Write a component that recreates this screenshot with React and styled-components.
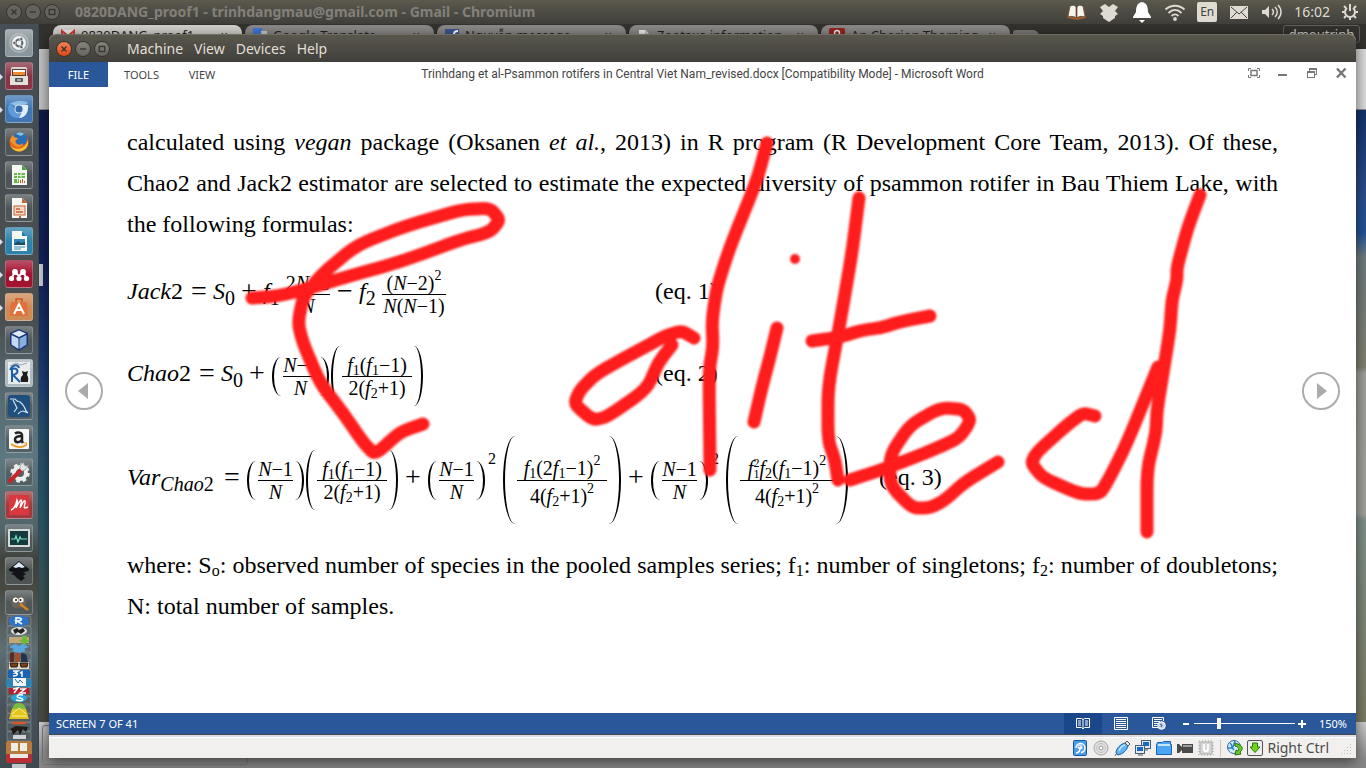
import React from "react";
import styled, { createGlobalStyle } from "styled-components";

const ui = '"Noto Sans", "Open Sans", sans-serif';
const serif = '"Liberation Serif", "Times New Roman", serif';

const GlobalStyle = createGlobalStyle`
  * { box-sizing: border-box; }
  body { margin: 0; font-family: ${ui}; }
  button, input { font: inherit; color: inherit; padding: 0; margin: 0; border: 0; background: none; }
  svg { display: block; flex: none; }
  p { margin: 0; }
`;

/* ---------- desktop ---------- */
const Desktop = styled.div`
  position: relative;
  min-height: 100vh;
  display: flex;
  flex-direction: column;
  overflow: hidden;
  background: #3c3b37;
`;
const Panel = styled.header`
  height: 24px;
  flex: none;
  display: flex;
  align-items: center;
  padding: 0 7px 0 6px;
  color: #dfdbd2;
  background: linear-gradient(#5d5b4f, #55534a 20%, #403f3a);
`;
const WindowControls = styled.div`
  display: flex;
  gap: 3px;
`;
const Control = styled.button`
  width: 16px;
  height: 16px;
  border-radius: 50%;
  border: 1px solid #35342f;
  display: grid;
  place-items: center;
  color: #35342f;
  background: ${(p) => (p.$close ? "linear-gradient(#f68257, #de4814)" : p.$dim ? "#65635b" : "linear-gradient(#85837a, #65635b)")};
`;
const PanelTitle = styled.h1`
  margin: 0 0 0 15px;
  flex: 1;
  font-size: 14px;
  line-height: 24px;
  font-weight: 700;
  color: #83807a;
  white-space: nowrap;
`;
const Indicators = styled.div`
  display: flex;
  align-items: center;
  gap: 11px;
`;
const Language = styled.span`
  width: 20px;
  height: 20px;
  border-radius: 2px;
  background: #dfdbd2;
  color: #45433d;
  font-size: 12px;
  line-height: 20px;
  text-align: center;
`;
const Clock = styled.time`
  font-size: 14px;
  line-height: 20px;
`;
const Below = styled.div`
  flex: 1;
  display: flex;
`;

/* ---------- launcher ---------- */
const Launcher = styled.nav`
  width: 39px;
  flex: none;
  height: calc(100vh - 24px);
  overflow: hidden;
  display: flex;
  flex-direction: column;
  padding: 5px 0 0 5px;
  background: linear-gradient(#454e54, #4b4f50 36%, #4a4f51 40%, #55666d 48%, #5c7880 58%, #526467 68%, #41423c 72%, #494a44 76%, #5e6e73 84%, #47525a 92%, #404b50);
  border-right: 1px solid #39474e;
`;
const Tile = styled.button`
  position: relative;
  flex: none;
  width: 28px;
  height: 28px;
  margin-bottom: 5px;
  border-radius: 3px;
  display: grid;
  place-items: center;
  background: linear-gradient(rgba(255,255,255,.25), rgba(255,255,255,0) 50%), ${(p) => p.$bg || "rgba(80,88,91,.7)"};
  border: 1px solid rgba(190,200,205,.35);
  &:last-of-type {
    height: 25px;
    margin-bottom: 0;
  }
  &::before {
    content: ${(p) => (p.$running ? '""' : "none")};
    position: absolute;
    left: -6px;
    top: 11px;
    border-left: 3px solid #dde;
    border-top: 3px solid transparent;
    border-bottom: 3px solid transparent;
  }
`;

/* ---------- browser behind ---------- */
const Browser = styled.main`
  flex: 1;
  min-width: 0;
  display: flex;
  flex-direction: column;
`;
const TabStrip = styled.div`
  height: 25px;
  flex: none;
  display: flex;
  gap: 3px;
  padding: 1px 6px 0 14px;
  background: #33322e;
`;
const BrowserTab = styled.div`
  width: 189px;
  height: 24px;
  flex: none;
  display: flex;
  align-items: flex-start;
  gap: 6px;
  padding: 2px 14px 0 8px;
  border-radius: 8px 8px 0 0;
  background: ${(p) => (p.$active ? "#d3d1cd" : "#8b8987")};
  color: #222;
  font-size: 13px;
  line-height: 16px;
`;
const TabName = styled.span`
  flex: 1;
  overflow: hidden;
  white-space: nowrap;
`;
const NewTab = styled.button`
  width: 26px;
  height: 16px;
  margin-top: 5px;
  border-radius: 3px 6px 3px 3px;
  background: #7c7a77;
`;
const Profile = styled.button`
  margin-left: auto;
  height: 18px;
  width: 77px;
  border: 1px solid #62605a;
  border-radius: 3px;
  color: #d5d2cb;
  font-size: 13px;
  line-height: 14px;
`;
const BrowserBar = styled.div`
  height: 61px;
  flex: none;
  background: linear-gradient(90deg, #c4c4c4, #dedede);
  border-bottom: 1px solid #8a8a8a;
`;
const Page = styled.div`
  flex: 1;
  background:
    linear-gradient(#c9ccd0, #c9ccd0) 0 154px / 4px 22px no-repeat,
    linear-gradient(#101b4c, #12225a 25%, #1b3f76 45%, #24506f 52%, #2b586b 68%, #475348 88%, #4c4d40);
`;
const PageEdge = styled.div`
  width: 10px;
  height: 100%;
  margin-left: auto;
  background: linear-gradient(#14326c, #2c4f8f 14%, #24549a 20%, #707c80 24%, #828272 42%, #a0a09c 43%, #a3a39d 66%, #81928a 67%, #7d7d66);
`;
const DownloadBar = styled.div`
  height: 46px;
  flex: none;
  padding: 3px;
  background: linear-gradient(#d0d0d0, #8a8a8a 80%, #868686);
`;
const DownloadItem = styled.div`
  width: 206px;
  height: 40px;
  border: 1px solid #777;
  border-radius: 3px;
`;

/* ---------- virtual machine window ---------- */
const VmWindow = styled.section`
  position: absolute;
  top: 34px;
  left: 49px;
  right: 10px;
  bottom: 10px;
  display: flex;
  flex-direction: column;
  border-radius: 7px 7px 0 0;
  background: #fff;
  box-shadow: 0 3px 14px rgba(0, 0, 0, .6);
`;
const VmTitle = styled.div`
  height: 28px;
  flex: none;
  display: flex;
  align-items: center;
  padding: 0 7px;
  border-top: 1px solid #706e62;
  border-radius: 7px 7px 0 0;
  background: linear-gradient(#59574d, #403f3a);
`;
const VmMenu = styled.nav`
  display: flex;
  gap: 11px;
  margin-left: 17px;
  color: #e2dfd7;
  font-size: 14px;
  line-height: 20px;
`;
const WordHeader = styled.header`
  height: 25px;
  flex: none;
  display: grid;
  grid-template-columns: 1fr auto 1fr;
  color: #444;
  font-size: 11px;
  line-height: 25px;
`;
const WordMenu = styled.nav`
  display: flex;
`;
const WordMenuItem = styled.button`
  width: ${(p) => p.$w}px;
  color: ${(p) => (p.$primary ? "#fff" : "#444")};
  background: ${(p) => (p.$primary ? "#2a579a" : "none")};
`;
const WordTitle = styled.h2`
  margin: 0;
  font-family: Roboto, ${ui};
  font-size: 12px;
  font-weight: 400;
  white-space: nowrap;
`;
const WordControls = styled.div`
  display: flex;
  justify-content: flex-end;
  align-items: center;
  gap: 17px;
  padding: 0 9px 3px 0;
`;
const Reader = styled.div`
  flex: 1;
  display: flex;
  justify-content: space-between;
  padding: 0 16px;
`;
const PageTurn = styled.button`
  flex: none;
  width: 38px;
  height: 38px;
  margin-top: 285px;
  border: 2px solid #ababab;
  border-radius: 50%;
  display: grid;
  place-items: center;
`;
const Article = styled.article`
  flex: 1;
  min-width: 0;
  margin: 0 24px;
  padding-top: 35px;
  color: #000;
  font-family: ${serif};
  font-size: 24px;
`;
const Line = styled.span`
  display: block;
  line-height: 41px;
  white-space: nowrap;
  text-align-last: ${(p) => (p.$last ? "left" : "justify")};
`;
const LowSub = styled.sub`
  font-size: 16px;
  line-height: 0;
  vertical-align: -3px;
`;

/* ---------- formulas ---------- */
const EquationRow = styled.div`
  height: ${(p) => p.$h}px;
  display: flex;
  align-items: center;
  line-height: 28px;
  white-space: nowrap;
`;
const Formula = styled.div`
  flex: none;
  width: ${(p) => p.$w}px;
  display: flex;
  align-items: center;
`;
const Term = styled.span`
  flex: none;
  font-style: italic;
  min-width: ${(p) => p.$w || 0}px;
`;
const Digit = styled.span`
  font-style: normal;
`;
const Sub = styled.sub`
  font-size: ${(p) => (p.$small ? 14 : 20)}px;
  font-style: ${(p) => (p.$italic ? "italic" : "normal")};
  line-height: 0;
  vertical-align: ${(p) => (p.$small ? -3 : -6)}px;
`;
const Sup = styled.sup`
  font-size: 14px;
  font-style: normal;
  line-height: 0;
  vertical-align: 10px;
`;
const Scripts = styled.span`
  display: inline-flex;
  flex-direction: column;
  vertical-align: 8px;
  font-size: 12px;
  line-height: 11px;
  height: 12px;
  font-style: normal;
`;
const Power = styled.span`
  width: 10px;
  margin: 0 4px 36px 2px;
  font-size: 16px;
  line-height: 16px;
`;
const Op = styled.span`
  flex: none;
  width: 16px;
  margin: 0 6px;
  text-align: center;
  font-size: 28px;
`;
const Fraction = styled.span`
  flex: none;
  display: flex;
  flex-direction: column;
  align-items: center;
  width: ${(p) => p.$w}px;
  margin: ${(p) => (p.$tall ? 12 : 6)}px 1px 0;
  font-size: 20px;
  line-height: ${(p) => (p.$tall ? 24 : 22)}px;
  font-style: italic;
`;
const Numerator = styled.span`
  width: 100%;
  display: flex;
  justify-content: center;
  border-bottom: 1px solid #000;
`;
const Denominator = styled.span`
  display: block;
  line-height: ${(p) => (p.$tall ? 30 : 22)}px;
`;
const Paren = styled.span`
  flex: none;
  width: ${(p) => (p.$h > 70 ? 12 : 9)}px;
  height: ${(p) => p.$h}px;
  margin: 6px 1px 0;
  border: 0 solid #000;
  border-width: ${(p) => (p.$right ? "0 2px 0 0" : "0 0 0 2px")};
  border-radius: ${(p) => (p.$right ? "0 100% 100% 0 / 0 50% 50% 0" : "100% 0 0 100% / 50% 0 0 50%")};
`;

/* ---------- status bars ---------- */
const WordStatus = styled.footer`
  height: 21px;
  flex: none;
  display: flex;
  align-items: center;
  padding: 0 9px 0 7px;
  background: #2a579a;
  color: #fff;
  font-size: 11px;
  line-height: 21px;
`;
const Views = styled.div`
  display: flex;
  margin-left: auto;
`;
const ViewButton = styled.button`
  width: 38px;
  height: 21px;
  display: grid;
  place-items: center;
  background: ${(p) => (p.$on ? "#19478a" : "none")};
`;
const ZoomGroup = styled.div`
  display: flex;
  align-items: center;
  gap: 3px;
  margin-left: 4px;
`;
const ZoomButton = styled.button`
  width: 9px;
  height: 15px;
  display: grid;
  place-items: center;
`;
const ZoomSlider = styled.input`
  appearance: none;
  width: 101px;
  height: 12px;
  background: linear-gradient(#fff, #fff) center / 100% 1px no-repeat;
  &::-webkit-slider-thumb {
    appearance: none;
    width: 4px;
    height: 11px;
    background: #fff;
  }
`;
const ZoomValue = styled.output`
  margin-left: 12px;
`;
const VmStatus = styled.footer`
  height: 24px;
  flex: none;
  display: flex;
  align-items: center;
  justify-content: flex-end;
  padding: 3px 2px 0 0;
  border-top: 1px solid #47474a;
  background: linear-gradient(#d9dce2 2px, #fff 2px, #fff 3px, #f1f0ee 3px);
  color: #4c4c4c;
  font-size: 14px;
  line-height: 20px;
`;
const IconGroup = styled.div`
  display: flex;
  align-items: center;
  gap: ${(p) => p.$gap}px;
`;
const Divider = styled.span`
  width: 1px;
  height: 17px;
  margin: 0 6px;
  background: #c6c4c0;
`;
const HostKey = styled.span`
  margin-right: 11px;
`;
const Ink = styled.svg`
  position: absolute;
  top: 0;
  left: 0;
  pointer-events: none;
  fill: none;
  stroke: #ff1e1e;
  stroke-width: 13;
  stroke-linecap: round;
  stroke-linejoin: round;
`;

const Svg = ({ s = 22, h, children, ...r }) => (
  <svg width={s} height={h || s} viewBox={`0 0 ${s} ${h || s}`} fill="none" aria-hidden="true" {...r}>{children}</svg>
);

const CtlGlyph = ({ kind }) => (
  <Svg s={8} stroke="currentColor" strokeWidth="1.3">
    {kind === "close" && <path d="M1.5 1.5l5 5M6.5 1.5l-5 5" />}
    {kind === "min" && <path d="M1 4h6" />}
    {kind === "max" && <rect x="1.2" y="1.5" width="5.6" height="5" />}
  </Svg>
);

/* ---------- launcher icons ---------- */
const doc = (accent, inner) => (
  <Svg>
    <path d="M4 1h10l5 5v15H4z" fill="#f7f7f4" />
    <path d="M14 1l5 5h-5z" fill={accent} />
    {inner}
  </Svg>
);
const launcherItems = [
  { name: "Dash", bg: "#8b979c", icon: <Svg><circle cx="11" cy="11" r="9" stroke="#c7ced1" strokeWidth="2" opacity=".5" /><circle cx="11" cy="11" r="7" fill="#f3f4f4" /><circle cx="11" cy="11" r="3.4" stroke="#5b676c" strokeWidth="2" /><g fill="#5b676c" stroke="#f3f4f4" strokeWidth=".7"><circle cx="6.4" cy="11" r="1.7" /><circle cx="13.3" cy="7" r="1.7" /><circle cx="13.3" cy="15" r="1.7" /></g></Svg> },
  { name: "Files", bg: "#8a3445", running: true, icon: <Svg><rect x="3" y="2" width="16" height="18" rx="1.5" fill="#d8d5ce" /><path d="M4 4h14v7H4z" fill="#5a3a28" /><path d="M5 5h12v2H5z" fill="#fff" /><path d="M5 7h12v3H5z" fill="#f08a35" /><path d="M2 11h18v9H2z" fill="#e3e1dc" /><rect x="7" y="13" width="8" height="4" rx="1" fill="#555" /><path d="M9 15h4" stroke="#fff" /></Svg> },
  { name: "Chromium", bg: "#4076b4", running: true, icon: <Svg><path d="M11 11L2 5c2 0 6-2 9-2s7 0 9 2z" fill="#8fbde6" /><path d="M2 5a9.500 9.500 0 0 0 9 15l2-6-6-3z" fill="#5e9bd8" /><path d="M13 7h7c1 7-3 13-9 13l4-8z" fill="#e3eff9" /><circle cx="11" cy="11" r="4.600" fill="#cfe2f4" /><circle cx="11" cy="11" r="3.500" fill="#3569ad" /></Svg> },
  { name: "Firefox", icon: <Svg><circle cx="11" cy="11" r="9.500" fill="#e8651b" /><path d="M5 4c4-4 11-3 14 2 1 4-1 8-5 8-4 1-7-2-6-5z" fill="#2a6db5" /><path d="M8 3c2-2 6-2 8 0l-3 2z" fill="#7fc4ea" /><path d="M2 9l3-5c0 2 2 3 5 3-1 2-3 2-3 3 0 4 6 5 8 2 0 3-3 4-5 4s-6-3-8-7z" fill="#f4932a" /><path d="M2 13c2 6 15 8 18-4 1 7-3 11-9 11.500-5 0-8-4-9-7.500z" fill="#f9c22f" /></Svg> },
  { name: "Calc", icon: doc("#4aa63c", <g><path d="M6 9h11v5H6zM6 15h5v4H6z" fill="#69b84e" /><path d="M6 11.500h11M9.500 9v9M13 9v5" stroke="#dff2d8" /><path d="M12 19v-3h1v3zM14 19v-4h1v4zM16 19v-2h1v2z" fill="#c65b2c" /></g>) },
  { name: "Impress", icon: doc("#c7622f", <g><rect x="6" y="9" width="11" height="9" fill="#f3d9cb" stroke="#c7622f" /><path d="M8 12h4M8 15h7" stroke="#c7622f" strokeWidth="1.5" /><path d="M11 19h2v2h-2z" fill="#c7622f" /></g>) },
  { name: "Writer", bg: "#2d83ad", running: true, icon: doc("#1c7db4", <g><path d="M6 9h11v5H6z" fill="#2f88b9" /><path d="M6 14l4-3 3 2 4-1v3H6z" fill="#1f4e62" /><path d="M6 17h11M6 19h7" stroke="#2f88b9" /></g>) },
  { name: "Mendeley", bg: "#a3132f", running: true, icon: <Svg><g fill="#fff"><circle cx="3.500" cy="15.500" r="2.600" /><circle cx="11" cy="15.500" r="2.600" /><circle cx="18.500" cy="15.500" r="2.600" /><circle cx="7" cy="9" r="2.900" /><circle cx="15" cy="9" r="2.900" /></g><path d="M3.500 15L7 9l4 4 4-4 3.500 6" stroke="#fff" strokeWidth="2" /></Svg> },
  { name: "Software", bg: "#cf8b55", running: true, icon: <Svg><path d="M8 6V3h6v3" stroke="#d9521c" strokeWidth="1.500" /><path d="M3 6h16l1 14H2z" fill="#e2703a" /><path d="M6 18l5-10 5 10M8 14h6" stroke="#fff" strokeWidth="2" /></Svg> },
  { name: "VirtualBox", icon: <Svg><path d="M11 0l9 4v12l-9 6-9-6V4z" fill="#1b3478" /><path d="M11 1.500L18 4.500l-7 3.500-7-3.500z" fill="#dfeaf6" /><path d="M3.500 6L10.500 9.500v10.500L3.500 15.500z" fill="#c3d9f0" /><path d="M18.500 6L11.500 9.500v10.500l7-4.500z" fill="#88b0dc" /></Svg> },
  { name: "RKWard", bg: "#aeb9bd", icon: <Svg><path d="M0 0h22v22H0z" fill="#e9eced" /><path d="M2 8c3-6 8-6 9-2M4 20V7c6-2 8 4 1 6l7 7" stroke="#1d5ea8" strokeWidth="2" /><path d="M13 20c-1-5 1-6 2-7l-1-4 3 1 3-1-1 4c2 3 1 5 1 7z" fill="#1c1c1c" /><path d="M2 4l6-3 5 2 6-2" stroke="#9da7ab" /></Svg> },
  { name: "MySQL Workbench", icon: <Svg><rect width="22" height="22" rx="3" fill="#1f4f7d" /><path d="M2 4h5l2 2 3 1c4 3 5 6 6 9l2 2-5-2c-3 0-4 2-5 3M5 5l4 8-3 4" stroke="#cfe2f0" strokeWidth="1.200" /></Svg> },
  { name: "Amazon", icon: <Svg><rect x="1" y="1" width="20" height="20" rx="1" fill="#f7f7f7" /><path d="M7 5.500c3-2 7-1 7 2v6l1 1.500M14 8c-4 0-7 1-7 3.500 0 3.500 5 3.500 7 0" stroke="#222" strokeWidth="2.500" /><path d="M3 16c5 4 11 4 15 1" stroke="#f29a1d" strokeWidth="1.800" /><path d="M16 15l3 0-1 3" stroke="#f29a1d" /></Svg> },
  { name: "Settings", icon: <Svg><circle cx="12" cy="12" r="6" stroke="#eceeee" strokeWidth="4" /><circle cx="12" cy="12" r="8.500" stroke="#eceeee" strokeWidth="2.500" strokeDasharray="3.700 3" /><path d="M2 20L14 8" stroke="#c8252a" strokeWidth="4" strokeLinecap="round" /><path d="M12 8l2 2 3-1 4-5-3 1-2-1 0-3-4 4z" fill="#e6e6e6" stroke="#888" strokeWidth=".6" /></Svg> },
  { name: "Mathcad", bg: "#a03a3e", icon: <Svg><rect x="1" y="1" width="20" height="20" fill="#d8393f" /><path d="M3 16c3-1 5-5 6-10 1 2 0 5-1 8 3-6 4-8 5-8s0 4-1 8c3-6 4-8 5-7s-2 7 0 7l3-1" stroke="#fff" strokeWidth="1.400" /></Svg> },
  { name: "System Monitor", icon: <Svg><rect x="0" y="2" width="22" height="18" rx="1" fill="#d7d9d8" /><rect x="2" y="4" width="18" height="14" fill="#133a3c" /><path d="M3 12h4l1-3 2 6 2-5 1 2h6" stroke="#7fe0c3" strokeWidth="1.200" /></Svg> },
  { name: "Inkscape", icon: <Svg><path d="M11 1l10 8c1 2-3 3-6 3l3 2-3 2 2 2-4 3-4-3-3-3-3-1 3-2C3 12 0 11 1 9z" fill="#101218" /><path d="M11 2l6 5-3 1-3-1-3 1-3-1z" fill="#dce8f6" /></Svg> },
  { name: "GIMP", icon: <Svg><path d="M2 3l5 2c4-2 9-1 11 3 2 5-3 8-8 8-5 1-8-3-6-7z" fill="#6b665b" /><circle cx="7.500" cy="8" r="2.600" fill="#fff" /><circle cx="13" cy="8" r="2.600" fill="#fff" /><circle cx="8" cy="8" r="1" fill="#111" /><circle cx="12.500" cy="8" r="1" fill="#111" /><path d="M12 12l8 6" stroke="#d98022" strokeWidth="2.500" /></Svg> },
];

const LauncherStack = () => (
  <svg width="28" height="153" viewBox="0 615 28 153" aria-hidden="true">
    <g stroke="#9aa6aa" strokeOpacity=".5" fill="#5c696e" fillOpacity=".5">
      {[616, 626, 635, 644, 652, 660, 669, 678, 687, 696, 704, 713, 722, 731].map((y) => <rect key={y} x="2" y={y} width="24" height="10" rx="2" />)}
    </g>
    <ellipse cx="14" cy="621" rx="10" ry="5.500" fill="#2c72c9" />
    <path d="M11 624v-6c7-1 7 3 1 3l5 3" stroke="#e4f0fb" strokeWidth="1.800" fill="none" />
    <ellipse cx="14" cy="631" rx="8" ry="4" fill="#e2e2df" />
    <path d="M8 630l4-2 2 2 4-2 2 3-4 3-3-2-3 2z" fill="#222" />
    <path d="M4 637h20v6H4z" fill="#c3a776" /><path d="M17 636h5v4h3l-6 5-5-5h3z" fill="#6dbb35" />
    <path d="M4 647l6-3 4 2 4-2 6 3-5 2 2 2-7 2-7-2 2-2z" fill="#58a8df" />
    <path d="M5 653l4-1v10H5z" fill="#5b2b28" /><path d="M10 653h5v9h-5z" fill="#a34e2f" /><path d="M16 653l5 1 2 8h-7z" fill="#23334e" />
    <path d="M4 662h20v7H4z" fill="#e1d9c9" /><path d="M5 663h8l-1 4H6zM15 663h8l-1 4h-6z" fill="#7b401b" stroke="#231a14" />
    <rect x="3" y="670" width="22" height="8" rx="1" fill="#1763b5" /><path d="M8 671h5l-3 2c4 0 3 3-2 3M17 677v-5l-2 1" stroke="#fff" strokeWidth="1.500" fill="none" />
    <path d="M1 679h26v8H1z" fill="#2c83b4" /><path d="M8 678h13v8H8z" fill="#f2f5f6" /><path d="M10 679l3 4 2-3 3 3" stroke="#326d92" fill="none" />
    <rect x="4" y="688" width="20" height="6" fill="#b71d2d" /><path d="M8 689l5-1-4 5M15 689h5l-5 4h6" stroke="#fff" strokeWidth="1.500" fill="none" />
    <ellipse cx="14" cy="698" rx="8" ry="4" fill="#26a6de" /><path d="M18 695c-6-1-8 2-3 3s3 4-4 2" stroke="#fff" strokeWidth="1.500" fill="none" />
    <path d="M7 709c2-8 12-8 14 0z" fill="#7bbd44" />
    <path d="M7 709h14l3 10H4z" fill="#e0c51d" /><path d="M7 714l7-6 7 6M7 716h15" stroke="#fff19a" fill="none" />
    <path d="M7 723h14" stroke="#d5542a" strokeWidth="2.500" /><path d="M5 729l6-3 12 1-2 5-3-3-3 6-2-5-5 5-1-4z" fill="#1f1a16" />
    <path d="M8 735h13v4H8z" fill="#cfd3d4" />
    <rect x="1" y="741" width="26" height="14" rx="2" fill="#b87b3e" /><path d="M6 743h7v8H6zM15 743h7v8h-7z" fill="#f0ece2" />
    <rect x="1" y="754" width="26" height="9" rx="2" fill="#b92e35" /><path d="M5 754h18v4H5z" fill="#ece9e5" />
    <path d="M7 764h14v4H7z" fill="#c1c6c8" />
  </svg>
);

/* ---------- tabs ---------- */
const tabs = [
  { name: "0820DANG_proof1", active: true, icon: <Svg s={14}><path d="M1 3h12v10H1z" fill="#eee" /><path d="M1 13V4l6 5 6-5v9" stroke="#d23c31" strokeWidth="2" /></Svg> },
  { name: "Google Translate", icon: <Svg s={14}><path d="M0 1h9l2 12H0z" fill="#3f78d8" /><path d="M8 4h6v10H9z" fill="#ccc" /></Svg> },
  { name: "Nguyễn message", icon: <Svg s={14}><path d="M0 2h14v12H0z" fill="#3a5794" /><path d="M9 14V7c0-2 1-3 4-3M6 9h7" stroke="#fff" strokeWidth="2" /></Svg> },
  { name: "Zootaxa information", icon: <Svg s={14}><path d="M2 3h7l3 4v7H2z" fill="#eee" /><path d="M9 3v4h3" stroke="#999" /></Svg> },
  { name: "An Chorion Thorping", icon: <Svg s={16}><rect y="1" width="16" height="15" rx="2" fill="#97221f" /><circle cx="8" cy="6" r="2.500" stroke="#eee" strokeWidth="1.500" /><path d="M8 9c4 1 3 5 0 5s-4-3 0-3" stroke="#eee" strokeWidth="1.500" /></Svg> },
];

/* ---------- indicator icons ---------- */
const indicatorIcons = [
  <Svg key="book"><path d="M2 17l2-11h15l2 11-9 2z" fill="#a05a2c" /><path d="M3 16L5 5c3-1 5-1 6 1v11c-2-2-5-2-8-1zM20 16L18 5c-3-1-5-1-6 1v11c2-2 5-2 8-1z" fill="#f7f5ef" stroke="#3d2b20" strokeWidth=".6" /></Svg>,
  <Svg key="dropbox"><path d="M7 3l4 3 4-3 5 3-3 4 3 3-3 2v2l-6 4-6-4v-2l-3-2 3-3-3-4z" fill="#dfdbd2" /></Svg>,
  <Svg key="bell"><path d="M11 1c5 1 6 5 6 10l3 5v1H2v-1l3-5C5 6 6 2 11 1z" fill="#fff" /><path d="M8 19h6l-3 3z" fill="#fff" /></Svg>,
  <Svg key="wifi" stroke="#dfdbd2" strokeWidth="1.800"><path d="M1.500 8.500C7 3.500 15 3.500 20.500 8.500M4.500 12c4-4 9-4 13 0M7.500 15c2-2 5-2 7 0" /><circle cx="11" cy="18" r="1" fill="#dfdbd2" /></Svg>,
];

const vmIcons = [
  <Svg key="disk" s={16}><rect x="1.500" y=".5" width="13" height="15" rx="1" fill="#4a9ee8" stroke="#1554a0" /><path d="M4 8a4.500 4.500 0 1 1 5 4.500M4 13c3 0 5-3 3-5l2-1 1 2" stroke="#fff" strokeWidth="1.500" /><circle cx="8" cy="7" r="2" stroke="#fff" /></Svg>,
  <Svg key="cd" s={16}><circle cx="8" cy="8" r="7" fill="#e1e1e1" stroke="#a5a5a5" /><circle cx="8" cy="8" r="4.500" stroke="#c4c4c4" /><circle cx="8" cy="8" r="2" stroke="#9a9a9a" fill="#fff" /></Svg>,
  <Svg key="usb" s={16}><path d="M2 13c0-5 5-9 9-10l3 3c-1 4-5 8-10 9z" fill="#5fb2f3" stroke="#1a5fb0" /><path d="M5 11c1-3 3-5 6-6" stroke="#c5e4fb" strokeWidth="1.500" /><path d="M11 3l2-2 3 3-2 2z" fill="#e8e8e8" stroke="#555" /><path d="M3 13l-2 3" stroke="#555" /></Svg>,
  <Svg key="net" s={16}><rect x="6.500" y=".5" width="9" height="8" fill="#e5e8ea" stroke="#44607b" /><path d="M8 2h6v4H8z" fill="#1669c4" /><rect x=".5" y="5.500" width="9" height="8" fill="#e5e8ea" stroke="#44607b" /><path d="M2 7h6v4H2z" fill="#1669c4" /><path d="M3 15h5M10 10h3" stroke="#555" /></Svg>,
  <Svg key="folder" s={16}><path d="M.5 4.500l1-2h5l1-1h7v3h1v10H.5z" fill="#4aa5f3" stroke="#1c62ae" /><path d="M2 5h12" stroke="#c9e5fc" strokeWidth="2" /></Svg>,
  <Svg key="cam" s={16}><path d="M0 4h2l3 3V4h11v9H5v-3l-3 3H0z" fill="#4a4a4a" /><path d="M6 6h9" stroke="#bbb" strokeWidth="1.500" /></Svg>,
  <Svg key="chip" s={16}><rect x="2" y="2" width="12" height="12" rx="1" fill="#d6d6d6" stroke="#aaa" /><rect x="1" y="1" width="14" height="14" stroke="#999" strokeDasharray="1 2" /><path d="M6 4v5c0 3 4 3 4 0V4" stroke="#fff" strokeWidth="1.800" /></Svg>,
];

const inkStrokes = [
  [[252, 298], [278, 296], [303, 290], [343, 278], [403, 261], [460, 240], [490, 232], [500, 220], [490, 208], [460, 210], [403, 227], [357, 245], [323, 273], [303, 297], [298, 323], [303, 343], [320, 383], [343, 413], [363, 442], [375, 455], [400, 432], [423, 424]],
  [[694, 338], [682, 331], [667, 335], [643, 348], [597, 373], [580, 390], [574, 404], [593, 420], [607, 417], [647, 389], [658, 363], [672, 345]],
  [[767, 143], [757, 180], [730, 247], [717, 287], [712, 320], [713, 347], [709, 370], [710, 470]],
  [[777, 328], [770, 357], [762, 387], [754, 422]],
  [[859, 198], [852, 253], [840, 323], [828, 387], [828, 440], [835, 460], [838, 480]],
  [[812, 341], [840, 337], [863, 330], [880, 328], [903, 321], [930, 316]],
  [[850, 480], [890, 467], [940, 447], [960, 437], [971, 420], [963, 409], [940, 408], [910, 425], [890, 455], [890, 485], [912, 508], [930, 508], [945, 500], [965, 482], [998, 462]],
  [[1095, 416], [1083, 413], [1067, 425], [1037, 452], [1031, 463], [1043, 478], [1080, 494], [1100, 494], [1110, 477], [1127, 443], [1158, 367]],
  [[1200, 195], [1188, 227], [1177, 267], [1177, 280], [1172, 300], [1170, 330], [1164, 367], [1157, 410], [1156, 433], [1147, 470], [1147, 532]],
];
function smooth(points) {
  let d = `M${points[0].join(" ")}`;
  for (let i = 1; i < points.length - 1; i++) {
    const [x, y] = points[i];
    const [nx, ny] = points[i + 1];
    const [px, py] = points[i - 1];
    // run straight towards each corner and round only its last third
    d += ` L${x + (px - x) / 3} ${y + (py - y) / 3} Q${x} ${y} ${x + (nx - x) / 3} ${y + (ny - y) / 3}`;
  }
  return `${d} L${points[points.length - 1].join(" ")}`;
}

const Group = ({ h, children }) => (<><Paren $h={h} />{children}<Paren $h={h} $right /></>);
const Frac = ({ w, tall, top, bottom }) => (<Fraction $w={w} $tall={tall}><Numerator><span>{top}</span></Numerator><Denominator $tall={tall}>{bottom}</Denominator></Fraction>);
const D = ({ children }) => <Digit>{children}</Digit>;
const F = ({ n }) => <>f<Sub $small>{n}</Sub></>;
const NOver = () => <Group h={39}><Frac w={35} top={<>N<D>−1</D></>} bottom="N" /></Group>;
const FProduct = () => <Group h={60}><Frac w={70} top={<><F n="1" /><D>(</D><F n="1" /><D>−1)</D></>} bottom={<><D>2(</D><F n="2" /><D>+1)</D></>} /></Group>;

export default function App() {
  return (
    <Desktop>
      <GlobalStyle />
      <Panel>
        <WindowControls>
          {["close", "min", "max"].map((k) => <Control key={k} $dim aria-label={k}><CtlGlyph kind={k} /></Control>)}
        </WindowControls>
        <PanelTitle>0820DANG_proof1 - trinhdangmau@gmail.com - Gmail - Chromium</PanelTitle>
        <Indicators>
          {indicatorIcons}
          <Language>En</Language>
          <Svg stroke="#45433d"><path d="M2 5h18v13H2z" fill="#dfdbd2" stroke="none" /><path d="M3 6l8 7 8-7M3 17l6-6M19 17l-6-6" /></Svg>
          <Svg stroke="#dfdbd2" strokeWidth="1.500"><path d="M1 9h3l4-4v12l-4-4H1z" fill="#dfdbd2" stroke="none" /><path d="M11 8c2 2 2 4 0 6M14 6c3 3 3 7 0 10M17 4c4 4 4 10 0 14" /></Svg>
          <Clock>16:02</Clock>
          <Svg s={18} stroke="#dfdbd2" strokeWidth="2"><path d="M6 5a5 5 0 1 0 6 0M9 1v7" /><path d="M1 9h2M15 9h2M3 15l2-2M15 15l-2-2M3 3l2 2M15 3l-2 2M9 17v-2" /></Svg>
        </Indicators>
      </Panel>
      <Below>
        <Launcher aria-label="Launcher">
          {launcherItems.map((it) => <Tile key={it.name} $bg={it.bg} $running={it.running} aria-label={it.name}>{it.icon}</Tile>)}
          <LauncherStack />
        </Launcher>
        <Browser>
          <TabStrip>
            {tabs.map((t) => <BrowserTab key={t.name} $active={t.active}>{t.icon}<TabName>{t.name}</TabName><span>×</span></BrowserTab>)}
            <NewTab aria-label="New tab" />
            <Profile>dmoutrinh</Profile>
          </TabStrip>
          <BrowserBar />
          <Page><PageEdge /></Page>
          <DownloadBar><DownloadItem /></DownloadBar>
        </Browser>
      </Below>

      <VmWindow>
        <VmTitle>
          <WindowControls>
            {["close", "min", "max"].map((k) => <Control key={k} $close={k === "close"} aria-label={k}><CtlGlyph kind={k} /></Control>)}
          </WindowControls>
          <VmMenu>
            {["Machine", "View", "Devices", "Help"].map((m) => <button key={m}>{m}</button>)}
          </VmMenu>
        </VmTitle>
        <WordHeader>
          <WordMenu>
            <WordMenuItem $w={59} $primary>FILE</WordMenuItem>
            <WordMenuItem $w={67}>TOOLS</WordMenuItem>
            <WordMenuItem $w={54}>VIEW</WordMenuItem>
          </WordMenu>
          <WordTitle>Trinhdang et al-Psammon rotifers in Central Viet Nam_revised.docx [Compatibility Mode] - Microsoft Word</WordTitle>
          <WordControls>
            <button aria-label="Full screen"><Svg s={12} stroke="#777"><path d="M3 1.500H.5V4M9 1.500h2.500V4M3 10.500H.5V8M9 10.500h2.500V8" /><rect x="3" y="3.500" width="6" height="5" strokeWidth="1.500" /></Svg></button>
            <button aria-label="Minimize"><Svg s={12}><path d="M1 8h9" stroke="#777" strokeWidth="2" /></Svg></button>
            <button aria-label="Restore"><Svg s={12} stroke="#777"><path d="M3.500 4V1.500h7v6H9" /><path d="M3 2h8" strokeWidth="2" /><rect x="1.500" y="5" width="7" height="5.500" /><path d="M1 5h8" strokeWidth="2" /></Svg></button>
            <button aria-label="Close"><Svg s={12} stroke="#777" strokeWidth="2.500"><path d="M2 1.500l8.500 9M10.500 1.500l-8.500 9" /></Svg></button>
          </WordControls>
        </WordHeader>
        <Reader>
          <PageTurn aria-label="Previous screen"><Svg s={12} h={16}><path d="M10 0v16L0 8z" fill="#ababab" /></Svg></PageTurn>
          <Article>
            <p>
              <Line>calculated using <em>vegan</em> package (Oksanen <em>et al.</em>, 2013) in R program (R Development Core Team, 2013). Of these,</Line>
              <Line>Chao2 and Jack2 estimator are selected to estimate the expected diversity of psammon rotifer in Bau Thiem Lake, with</Line>
              <Line $last>the following formulas:</Line>
            </p>
            <EquationRow $h={92}>
              <Formula $w={528}>
                <Term $w={58}>Jack<D>2</D></Term><Op>=</Op><Term>S<Sub>0</Sub></Term><Op>+</Op><Term $w={22}>f<Sub>1</Sub></Term>
                <Frac w={44} top={<D>2<em>N</em>−3</D>} bottom="N" />
                <Op>−</Op><Term $w={22}>f<Sub>2</Sub></Term>
                <Frac w={64} top={<><D>(</D>N<D>−2)</D><Sup>2</Sup></>} bottom={<>N<D>(</D>N<D>−1)</D></>} />
              </Formula>
              (eq. 1)
            </EquationRow>
            <EquationRow $h={72}>
              <Formula $w={528}>
                <Term $w={66}>Chao<D>2</D></Term><Op>=</Op><Term>S<Sub>0</Sub></Term><Op>+</Op>
                <NOver /><FProduct />
              </Formula>
              (eq. 2)
            </EquationRow>
            <EquationRow $h={136}>
              <Formula $w={752}>
                <Term $w={91}>Var<Sub $italic>Chao<D>2</D></Sub></Term><Op>=</Op>
                <NOver /><FProduct /><Op>+</Op>
                <NOver /><Power>2</Power>
                <Group h={88}><Frac w={90} tall top={<><F n="1" /><D>(2</D><F n="1" /><D>−1)</D><Sup>2</Sup></>} bottom={<><D>4(</D><F n="2" /><D>+1)</D><Sup>2</Sup></>} /></Group>
                <Op>+</Op>
                <NOver /><Power>2</Power>
                <Group h={88}><Frac w={94} tall top={<>f<Scripts><span>2</span><span>1</span></Scripts><F n="2" /><D>(</D><F n="1" /><D>−1)</D><Sup>2</Sup></>} bottom={<><D>4(</D><F n="2" /><D>+1)</D><Sup>2</Sup></>} /></Group>
              </Formula>
              (eq. 3)
            </EquationRow>
            <p>
              <Line>where: S<LowSub>o</LowSub>: observed number of species in the pooled samples series; f<LowSub>1</LowSub>: number of singletons; f<LowSub>2</LowSub>: number of doubletons;</Line>
              <Line $last>N: total number of samples.</Line>
            </p>
          </Article>
          <PageTurn aria-label="Next screen"><Svg s={12} h={16}><path d="M2 0v16l10-8z" fill="#ababab" /></Svg></PageTurn>
        </Reader>
        <WordStatus>
          <span>SCREEN 7 OF 41</span>
          <Views>
            <ViewButton $on aria-label="Read mode"><Svg s={14} h={13} stroke="#fff"><path d="M.5 1.500h5l1.500 1 1.500-1h5v9h-5L7 12l-1.500-1.500h-5zM7 2v9M2 4h3M2 6h3M2 8h3M9 4h3M9 6h3M9 8h3" /></Svg></ViewButton>
            <ViewButton aria-label="Print layout"><Svg s={14} h={13} stroke="#fff"><path d="M.5.5h13v12H.5zM2 2.500h10M2 4.500h10M2 6.500h10M2 8.500h10M2 10.500h10" /></Svg></ViewButton>
            <ViewButton aria-label="Web layout"><Svg s={14} h={13} stroke="#fff"><path d="M6 10.500H.5V.5h11V4M2 2.500h8M2 4.500h6M2 6.500h4M2 8.500h3" /><circle cx="9.500" cy="8.500" r="3.800" fill="#c5d3e8" stroke="#fff" /><path d="M8 7l2 1-1 2" stroke="#2a579a" /></Svg></ViewButton>
          </Views>
          <ZoomGroup>
            <ZoomButton aria-label="Zoom out"><Svg s={8}><path d="M1 4h6" stroke="#fff" strokeWidth="2" /></Svg></ZoomButton>
            <ZoomSlider type="range" min="0" max="100" defaultValue="24" aria-label="Zoom" />
            <ZoomButton aria-label="Zoom in"><Svg s={8}><path d="M0 4h8M4 0v8" stroke="#fff" strokeWidth="2" /></Svg></ZoomButton>
          </ZoomGroup>
          <ZoomValue>150%</ZoomValue>
        </WordStatus>
        <VmStatus>
          <IconGroup $gap={5}>{vmIcons}</IconGroup>
          <Divider />
          <IconGroup $gap={4}>
            <Svg s={16}><circle cx="7" cy="7" r="6.500" fill="#d5ebf9" stroke="#2b6ca3" /><path d="M3 3c3 2 1 5 4 7M1 8h5M8 1L6 7" stroke="#2a82cd" strokeWidth="1.500" /><path d="M8 3l5 2c3 2 3 5 0 7l1 2-6 1 1-5 2 1c1-2 1-4-3-5z" fill="#6bc92e" stroke="#276d14" /></Svg>
            <Svg s={16}><rect x=".5" y=".5" width="15" height="15" rx="1.500" fill="#eee" stroke="#555" /><path d="M5.500 3h5v4H13l-5 5.500L3 7h2.500z" fill="#70d718" stroke="#2e7810" /></Svg>
            <HostKey>Right Ctrl</HostKey>
          </IconGroup>
          <Svg s={14}><path fill="#bdbbb7" d="M10 3h1v1h-1zM7 6h1v1H7zM10 6h1v1h-1zM4 9h1v1H4zM7 9h1v1H7zM10 9h1v1h-1zM1 12h1v1H1zM4 12h1v1H4zM7 12h1v1H7zM10 12h1v1h-1z" /></Svg>
        </VmStatus>
      </VmWindow>

      <Ink width="1366" height="768" viewBox="0 0 1366 768" aria-hidden="true">
        <defs><filter id="soft" x="0" y="0" width="1366" height="768" filterUnits="userSpaceOnUse"><feGaussianBlur stdDeviation="1" /></filter></defs>
        <g filter="url(#soft)">
          {inkStrokes.map((s, i) => <path key={i} d={smooth(s)} />)}
          <circle cx="795" cy="259" r="5" fill="#ff1e1e" stroke="none" />
        </g>
      </Ink>
    </Desktop>
  );
}
